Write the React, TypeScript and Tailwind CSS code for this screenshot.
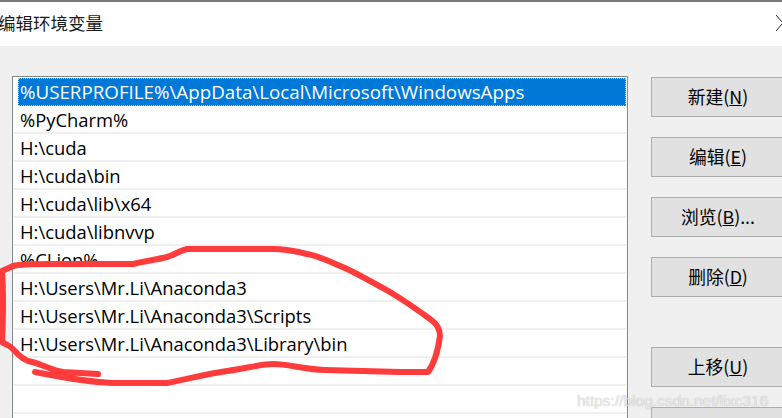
const paths = [
  "%USERPROFILE%\\AppData\\Local\\Microsoft\\WindowsApps",
  "%PyCharm%",
  "H:\\cuda",
  "H:\\cuda\\bin",
  "H:\\cuda\\lib\\x64",
  "H:\\cuda\\libnvvp",
  "%CLion%",
  "H:\\Users\\Mr.Li\\Anaconda3",
  "H:\\Users\\Mr.Li\\Anaconda3\\Scripts",
  "H:\\Users\\Mr.Li\\Anaconda3\\Library\\bin",
  "",
  "",
  "",
];

const buttons = [
  { label: "新建(", key: "N", tail: ")", gap: "mt-0" },
  { label: "编辑(", key: "E", tail: ")", gap: "mt-5" },
  { label: "浏览(", key: "B", tail: ")...", gap: "mt-5" },
  { label: "删除(", key: "D", tail: ")", gap: "mt-5" },
  { label: "上移(", key: "U", tail: ")", gap: "mt-[50px]" },
];

const App = () => {
  return (
    <div className="relative w-[782px] h-[418px] overflow-hidden bg-[#f0f0f0] font-['Open_Sans','Noto_Sans_CJK_SC',sans-serif] text-black">
      <div className="h-[2px] bg-[#7a7a7a]" />
      <div className="flex h-[44px] items-center justify-between bg-white">
        <span className="ml-[-2px] mb-[2px] text-[17.5px] font-['Noto_Sans_CJK_SC',sans-serif] text-[#1a1a1a]">
          编辑环境变量
        </span>
        <svg width="6" height="16" viewBox="0 0 6 16" className="mb-[3px]" fill="none" stroke="#222" strokeWidth="1">
          <path d="M0 0 L6 7 M6 9 L0 16" />
        </svg>
      </div>

      <div className="flex items-start pl-3 pt-[30px]">
        <div className="w-[616px] shrink-0 border border-[#828790] bg-white pl-[5px] pr-px pt-px">
          {paths.map((path, i) => (
            <div
              key={i}
              className={
                i === 0
                  ? "h-[28px] border border-dotted border-[#f0c080] bg-[#0078d7] pl-[1px] text-[18.75px] leading-[25px] text-white whitespace-nowrap"
                  : "ml-[-5px] h-[28px] border-b-2 border-[#f0f0f0] pl-[7px] text-[18.4px] leading-[28px] whitespace-nowrap"
              }
            >
              {path}
            </div>
          ))}
        </div>

        <div className="ml-[23px] w-[134px] shrink-0 pt-px">
          {buttons.map((b) => (
            <div
              key={b.key}
              className={`${b.gap} flex h-[40px] items-center justify-center border border-[#adadad] bg-[#e1e1e1] pb-[2px] text-[17.75px] font-['Noto_Sans_CJK_SC',sans-serif]`}
            >
              {b.label}
              <span className="underline">{b.key}</span>
              {b.tail}
            </div>
          ))}
          <div className="mt-5 h-[40px] border border-[#adadad] bg-[#e1e1e1]" />
        </div>
      </div>

      {/* red marker scribble drawn over the list */}
      <svg className="absolute left-0 top-0" width="782" height="418" fill="none" stroke="#ff3b3b" strokeWidth="6" strokeLinecap="round" strokeLinejoin="round">
        <path d="M35 372 C60 377 90 382 113 383 L167 383 C180 381 205 374 227 371 C245 369 260 364 273 364 C290 364 300 369 325 370 L400 372 L428 372 C434 364 438 350 440 336 C440 328 436 323 430 319 C415 308 400 298 390 292 C375 284 360 275 347 269 C330 262 320 256 307 254 C295 251 285 249 273 249 L187 249 C178 251 175 255 167 257 C155 260 145 261 133 264 L50 264 C30 264 20 264 13 266 L2 271 C3 285 3 320 2 342 C6 345 10 345 13 349 C18 354 20 358 28 361 C40 363 50 370 63 372 L98 374" />
      </svg>

      <span className="absolute left-[577px] top-[389px] text-[15.5px] font-['Liberation_Sans',sans-serif] text-white/70 [text-shadow:0_0_1px_rgba(90,90,90,0.5)]">
        https://blog.csdn.net/lixc316
      </span>
    </div>
  );
};

export default App;
